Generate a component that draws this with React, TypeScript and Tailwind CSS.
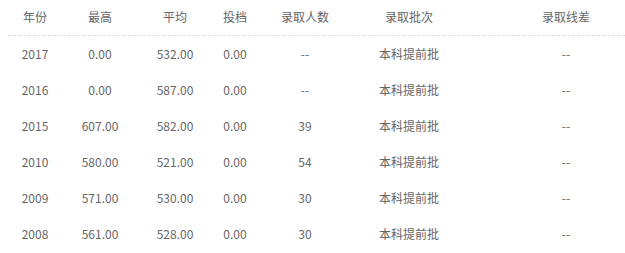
import React from "react";

const rows = [
  ["2017", "0.00", "532.00", "0.00", "--", "本科提前批", "--"],
  ["2016", "0.00", "587.00", "0.00", "--", "本科提前批", "--"],
  ["2015", "607.00", "582.00", "0.00", "39", "本科提前批", "--"],
  ["2010", "580.00", "521.00", "0.00", "54", "本科提前批", "--"],
  ["2009", "571.00", "530.00", "0.00", "30", "本科提前批", "--"],
  ["2008", "561.00", "528.00", "0.00", "30", "本科提前批", "--"],
];

const headers = ["年份", "最高", "平均", "投档", "录取人数", "录取批次", "录取线差"];

const grid = "grid grid-cols-[54px_76px_74px_46px_94px_114px_1fr] items-center";

export default function App() {
  return (
    <div
      className="w-[625px] h-[253px] bg-white overflow-hidden pl-[8px] text-[12px] text-[#666]"
      style={{ fontFamily: '"Microsoft YaHei", "Noto Sans CJK SC", sans-serif' }}
    >
      <div className={`${grid} h-[36px] pb-px border-b border-dashed border-[#dcdcdc]`}>
        {headers.map((h, i) => (
          <div key={i} className={`text-center ${i === 6 ? "pl-[41px]" : ""}`}>
            {h}
          </div>
        ))}
      </div>
      {rows.map((r, ri) => (
        <div key={ri} className={`${grid} h-[36px]`}>
          {r.map((c, i) => (
            <div key={i} className={`text-center ${i === 6 ? "pl-[41px]" : ""}`}>
              {c}
            </div>
          ))}
        </div>
      ))}
    </div>
  );
}
